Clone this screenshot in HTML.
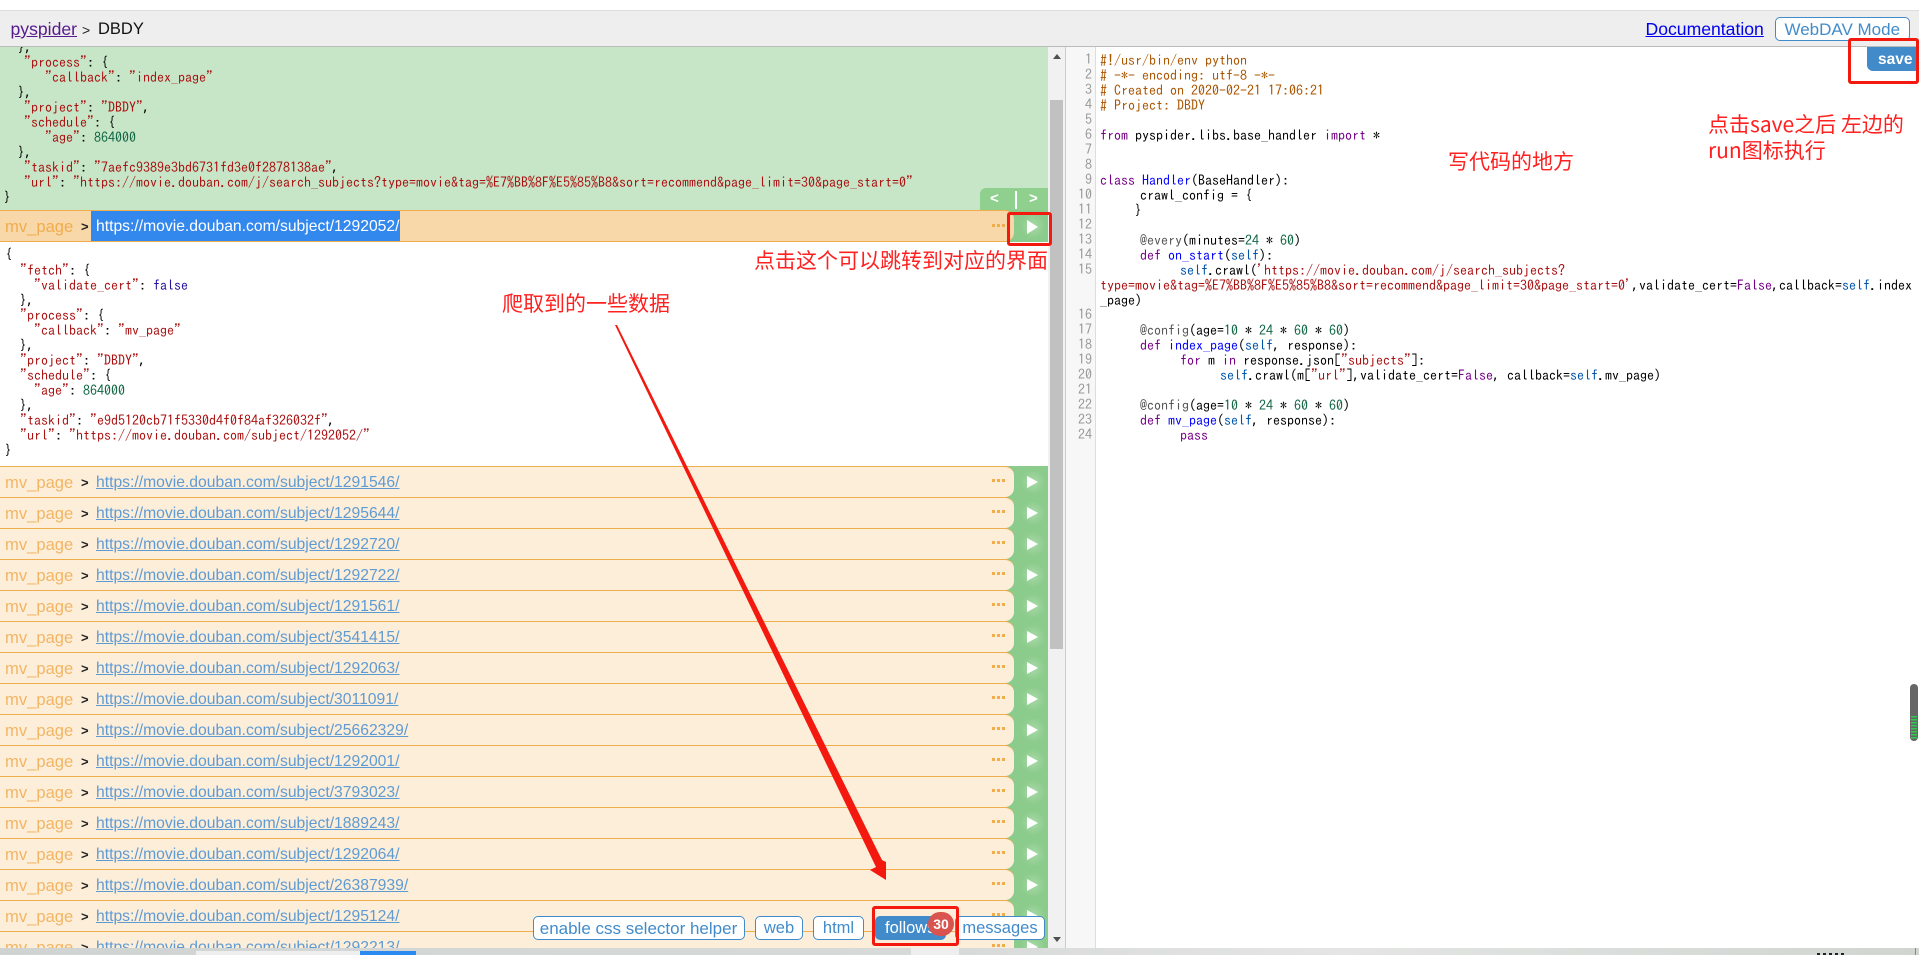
<!DOCTYPE html>
<html lang="zh"><head><meta charset="utf-8"><title>pyspider DBDY</title>
<style>
html,body{margin:0;padding:0;width:1919px;height:955px;overflow:hidden;background:#fff}
body{position:relative;font-family:"Liberation Sans","Noto Sans CJK SC",sans-serif}
.a{position:absolute}
.c{position:absolute;white-space:pre;height:15px;line-height:15px;font:14px/15px "IPAGothic","Liberation Mono",monospace;color:#000}
.s{color:#a11}.n{color:#164}.k{color:#708}.d{color:#00f}.v{color:#05a}.h{color:#a50}.m{color:#555}.t{color:#219}
.ln{position:absolute;left:1066px;width:26px;text-align:right;font:14px/15px "IPAGothic","Liberation Mono",monospace;color:#999}
.row{position:absolute;left:0;width:1048px;height:31px;background:#8bcb8b;overflow:hidden}
.row i{position:absolute;left:0;top:0;width:1014px;height:31px;box-sizing:border-box;background:#fdeeda;border-top:1px solid #f0ad4e;border-radius:0 9px 9px 0}
.row em{position:absolute;left:5px;top:6px;font:normal 16.6px/22px "Liberation Sans",sans-serif;color:#f2b564}
.row u.g{position:absolute;left:81px;top:6px;font:bold 13px/22px "Liberation Sans",sans-serif;color:#222;text-decoration:none}
.row a{position:absolute;left:96px;top:6px;font:15.7px/22px "Liberation Sans",sans-serif;color:#5f9bd3;text-decoration:underline;white-space:nowrap}
.row span.dots{position:absolute;left:992px;top:13px;width:3px;height:3px;background:#f0ad4e;box-shadow:5px 0 #f0ad4e,10px 0 #f0ad4e}
.row span.tri{position:absolute;left:1027px;top:10px;width:0;height:0;border-left:11px solid #fff;border-top:6px solid transparent;border-bottom:6px solid transparent}
.row span.glow{position:absolute;left:1018px;top:1px;width:30px;height:30px;background:radial-gradient(circle,#a9d9a9 0,#8bcb8b 60%)}
.btn{position:absolute;top:916px;height:24px;box-sizing:border-box;border:1px solid #428bca;border-radius:5px;background:#fff;color:#428bca;font:16.5px/22px "Liberation Sans",sans-serif;text-align:center;white-space:nowrap}
.cn{position:absolute;color:#ff2020;font-family:"Noto Sans CJK SC",sans-serif;font-size:21px;line-height:28px;white-space:nowrap}
.box{position:absolute;box-sizing:border-box;border:3px solid #f3190f;border-radius:3px}
</style></head><body>

<div class="a" style="left:0;top:10px;width:1919px;height:37px;box-sizing:border-box;background:#eee;border-top:1px solid #ddd;border-bottom:1px solid #bbb"></div>
<a class="a" style="left:10.5px;top:17px;font-size:17.6px;line-height:24px;color:#551a8b;text-decoration:underline">pyspider</a>
<div class="a" style="left:82px;top:18px;font-size:14px;line-height:24px;color:#222">&gt;</div>
<div class="a" style="left:98px;top:17px;font-size:16.5px;line-height:24px;color:#111">DBDY</div>
<a class="a" style="left:1645.5px;top:17px;font-size:17.6px;line-height:24px;color:#00e;text-decoration:underline;white-space:nowrap">Documentation</a>
<div class="a" style="left:1774.5px;top:17px;width:135.5px;height:24px;box-sizing:border-box;border:1px solid #428bca;border-radius:5px;color:#428bca;font-size:17px;line-height:23px;text-align:center;white-space:nowrap;background:#fff">WebDAV Mode</div>

<!-- green response -->
<div class="a" style="left:0;top:47px;width:1048px;height:163px;background:#c7e5c7;overflow:hidden">
<div class="c" style="left:18px;top:-7px">},</div>
<div class="c" style="left:24px;top:8px"><span class="s">"process"</span>: {</div>
<div class="c" style="left:45px;top:23px"><span class="s">"callback"</span>: <span class="s">"index_page"</span></div>
<div class="c" style="left:18px;top:38px">},</div>
<div class="c" style="left:24px;top:53px"><span class="s">"project"</span>: <span class="s">"DBDY"</span>,</div>
<div class="c" style="left:24px;top:68px"><span class="s">"schedule"</span>: {</div>
<div class="c" style="left:45px;top:83px"><span class="s">"age"</span>: <span class="n">864000</span></div>
<div class="c" style="left:18px;top:98px">},</div>
<div class="c" style="left:24px;top:113px"><span class="s">"taskid"</span>: <span class="s">"7aefc9389e3bd6731fd3e0f2878138ae"</span>,</div>
<div class="c" style="left:24px;top:128px"><span class="s">"url"</span>: <span class="s">"https://movie.douban.com/j/search_subjects?type=movie&amp;tag=%E7%BB%8F%E5%85%B8&amp;sort=recommend&amp;page_limit=30&amp;page_start=0"</span></div>
<div class="c" style="left:4px;top:143px">}</div>
</div>
<div class="a" style="left:980px;top:188px;width:68px;height:22px;background:#8fd08f;border-radius:6px 0 0 0"></div>
<div class="a" style="left:990px;top:188px;font:bold 15px/22px 'Liberation Sans',sans-serif;color:#fff">&lt;</div>
<div class="a" style="left:1015px;top:191px;width:2px;height:18px;background:#fff"></div>
<div class="a" style="left:1029px;top:188px;font:bold 15px/22px 'Liberation Sans',sans-serif;color:#fff">&gt;</div>

<!-- selected row -->
<div class="a" style="left:0;top:210px;width:1048px;height:32px;background:#8bcb8b;overflow:hidden">
<div class="a" style="left:0;top:0;width:1014px;height:32px;box-sizing:border-box;background:#f8d7a8;border-top:1px solid #f0ad4e;border-bottom:1px solid #f0ad4e;border-radius:0 9px 9px 0"></div>
<div class="a" style="left:1018px;top:1px;width:30px;height:30px;background:radial-gradient(circle,#a9d9a9 0,#8bcb8b 60%)"></div>
<div class="a" style="left:91px;top:1px;width:309px;height:30px;background:#3388ee"></div>
<div class="a" style="left:5px;top:6px;font-size:16.6px;line-height:22px;color:#f0ad4e">mv_page</div>
<div class="a" style="left:81px;top:6px;font-weight:bold;font-size:13px;line-height:22px;color:#222">&gt;</div>
<div class="a" style="left:96px;top:6px;font-size:15.7px;line-height:22px;color:#fff;white-space:nowrap">https://movie.douban.com/subject/1292052/</div>
<div class="a" style="left:992px;top:14px;width:3px;height:3px;background:#f0ad4e;box-shadow:5px 0 #f0ad4e,10px 0 #f0ad4e"></div>
<div class="a" style="left:1027px;top:10px;width:0;height:0;border-left:11px solid #fff;border-top:7px solid transparent;border-bottom:7px solid transparent"></div>
</div>

<!-- white response -->
<div class="c" style="left:5px;top:247px">{</div>
<div class="c" style="left:20px;top:263px"><span class="s">"fetch"</span>: {</div>
<div class="c" style="left:34px;top:278px"><span class="s">"validate_cert"</span>: <span class="t">false</span></div>
<div class="c" style="left:20px;top:293px">},</div>
<div class="c" style="left:20px;top:308px"><span class="s">"process"</span>: {</div>
<div class="c" style="left:34px;top:323px"><span class="s">"callback"</span>: <span class="s">"mv_page"</span></div>
<div class="c" style="left:20px;top:338px">},</div>
<div class="c" style="left:20px;top:353px"><span class="s">"project"</span>: <span class="s">"DBDY"</span>,</div>
<div class="c" style="left:20px;top:368px"><span class="s">"schedule"</span>: {</div>
<div class="c" style="left:34px;top:383px"><span class="s">"age"</span>: <span class="n">864000</span></div>
<div class="c" style="left:20px;top:398px">},</div>
<div class="c" style="left:20px;top:413px"><span class="s">"taskid"</span>: <span class="s">"e9d5120cb71f5330d4f0f84af326032f"</span>,</div>
<div class="c" style="left:20px;top:428px"><span class="s">"url"</span>: <span class="s">"https://movie.douban.com/subject/1292052/"</span></div>
<div class="c" style="left:5px;top:443px">}</div>

<!-- rows -->
<div class="row" style="top:466px"><span class="glow"></span><i></i><em>mv_page</em><u class="g">&gt;</u><a>https://movie.douban.com/subject/1291546/</a><span class="dots"></span><span class="tri"></span></div>
<div class="row" style="top:497px"><span class="glow"></span><i></i><em>mv_page</em><u class="g">&gt;</u><a>https://movie.douban.com/subject/1295644/</a><span class="dots"></span><span class="tri"></span></div>
<div class="row" style="top:528px"><span class="glow"></span><i></i><em>mv_page</em><u class="g">&gt;</u><a>https://movie.douban.com/subject/1292720/</a><span class="dots"></span><span class="tri"></span></div>
<div class="row" style="top:559px"><span class="glow"></span><i></i><em>mv_page</em><u class="g">&gt;</u><a>https://movie.douban.com/subject/1292722/</a><span class="dots"></span><span class="tri"></span></div>
<div class="row" style="top:590px"><span class="glow"></span><i></i><em>mv_page</em><u class="g">&gt;</u><a>https://movie.douban.com/subject/1291561/</a><span class="dots"></span><span class="tri"></span></div>
<div class="row" style="top:621px"><span class="glow"></span><i></i><em>mv_page</em><u class="g">&gt;</u><a>https://movie.douban.com/subject/3541415/</a><span class="dots"></span><span class="tri"></span></div>
<div class="row" style="top:652px"><span class="glow"></span><i></i><em>mv_page</em><u class="g">&gt;</u><a>https://movie.douban.com/subject/1292063/</a><span class="dots"></span><span class="tri"></span></div>
<div class="row" style="top:683px"><span class="glow"></span><i></i><em>mv_page</em><u class="g">&gt;</u><a>https://movie.douban.com/subject/3011091/</a><span class="dots"></span><span class="tri"></span></div>
<div class="row" style="top:714px"><span class="glow"></span><i></i><em>mv_page</em><u class="g">&gt;</u><a>https://movie.douban.com/subject/25662329/</a><span class="dots"></span><span class="tri"></span></div>
<div class="row" style="top:745px"><span class="glow"></span><i></i><em>mv_page</em><u class="g">&gt;</u><a>https://movie.douban.com/subject/1292001/</a><span class="dots"></span><span class="tri"></span></div>
<div class="row" style="top:776px"><span class="glow"></span><i></i><em>mv_page</em><u class="g">&gt;</u><a>https://movie.douban.com/subject/3793023/</a><span class="dots"></span><span class="tri"></span></div>
<div class="row" style="top:807px"><span class="glow"></span><i></i><em>mv_page</em><u class="g">&gt;</u><a>https://movie.douban.com/subject/1889243/</a><span class="dots"></span><span class="tri"></span></div>
<div class="row" style="top:838px"><span class="glow"></span><i></i><em>mv_page</em><u class="g">&gt;</u><a>https://movie.douban.com/subject/1292064/</a><span class="dots"></span><span class="tri"></span></div>
<div class="row" style="top:869px"><span class="glow"></span><i></i><em>mv_page</em><u class="g">&gt;</u><a>https://movie.douban.com/subject/26387939/</a><span class="dots"></span><span class="tri"></span></div>
<div class="row" style="top:900px"><span class="glow"></span><i></i><em>mv_page</em><u class="g">&gt;</u><a>https://movie.douban.com/subject/1295124/</a><span class="dots"></span><span class="tri"></span></div>
<div class="row" style="top:931px"><span class="glow"></span><i></i><em>mv_page</em><u class="g">&gt;</u><a>https://movie.douban.com/subject/1292213/</a><span class="dots"></span><span class="tri"></span></div>

<!-- scrollbar -->
<div class="a" style="left:1048px;top:47px;width:17px;height:901px;background:#f1f1f1"></div>
<div class="a" style="left:1050px;top:100px;width:13px;height:549px;background:#c1c1c1"></div>
<div class="a" style="left:1052.5px;top:54px;width:0;height:0;border-left:4px solid transparent;border-right:4px solid transparent;border-bottom:5px solid #505050"></div>
<div class="a" style="left:1052.5px;top:937px;width:0;height:0;border-left:4px solid transparent;border-right:4px solid transparent;border-top:5px solid #505050"></div>
<div class="a" style="left:1065px;top:47px;width:1px;height:901px;background:#ccc"></div>

<!-- gutter -->
<div class="a" style="left:1066px;top:47px;width:30px;height:901px;box-sizing:border-box;background:#f7f7f7;border-right:1px solid #ddd"></div>
<div class="ln" style="top:52px">1</div><div class="ln" style="top:67px">2</div><div class="ln" style="top:82px">3</div><div class="ln" style="top:97px">4</div><div class="ln" style="top:112px">5</div><div class="ln" style="top:127px">6</div><div class="ln" style="top:142px">7</div><div class="ln" style="top:157px">8</div><div class="ln" style="top:172px">9</div><div class="ln" style="top:187px">10</div><div class="ln" style="top:202px">11</div><div class="ln" style="top:217px">12</div><div class="ln" style="top:232px">13</div><div class="ln" style="top:247px">14</div><div class="ln" style="top:262px">15</div><div class="ln" style="top:307px">16</div><div class="ln" style="top:322px">17</div><div class="ln" style="top:337px">18</div><div class="ln" style="top:352px">19</div><div class="ln" style="top:367px">20</div><div class="ln" style="top:382px">21</div><div class="ln" style="top:397px">22</div><div class="ln" style="top:412px">23</div><div class="ln" style="top:427px">24</div>

<!-- code -->
<div class="a" style="left:0;top:1px;width:1919px;height:0">
<div class="c h" style="left:1100px;top:52px">#!/usr/bin/env python</div>
<div class="c h" style="left:1100px;top:67px"># -*- encoding: utf-8 -*-</div>
<div class="c h" style="left:1100px;top:82px"># Created on 2020-02-21 17:06:21</div>
<div class="c h" style="left:1100px;top:97px"># Project: DBDY</div>
<div class="c" style="left:1100px;top:127px"><span class="k">from</span> pyspider.libs.base_handler <span class="k">import</span> *</div>
<div class="c" style="left:1100px;top:172px"><span class="k">class</span> <span class="d">Handler</span>(BaseHandler):</div>
<div class="c" style="left:1140px;top:187px">crawl_config = {</div>
<div class="c" style="left:1135px;top:202px">}</div>
<div class="c" style="left:1140px;top:232px"><span class="m">@every</span>(minutes=<span class="n">24</span> * <span class="n">60</span>)</div>
<div class="c" style="left:1140px;top:247px"><span class="k">def</span> <span class="d">on_start</span>(<span class="v">self</span>):</div>
<div class="c" style="left:1180px;top:262px"><span class="v">self</span>.crawl(<span class="s">'https://movie.douban.com/j/search_subjects?</span></div>
<div class="c" style="left:1100px;top:277px"><span class="s">type=movie&amp;tag=%E7%BB%8F%E5%85%B8&amp;sort=recommend&amp;page_limit=30&amp;page_start=0'</span>,validate_cert=<span class="k">False</span>,callback=<span class="v">self</span>.index</div>
<div class="c" style="left:1100px;top:292px">_page)</div>
<div class="c" style="left:1140px;top:322px"><span class="m">@config</span>(age=<span class="n">10</span> * <span class="n">24</span> * <span class="n">60</span> * <span class="n">60</span>)</div>
<div class="c" style="left:1140px;top:337px"><span class="k">def</span> <span class="d">index_page</span>(<span class="v">self</span>, response):</div>
<div class="c" style="left:1180px;top:352px"><span class="k">for</span> m <span class="k">in</span> response.json[<span class="s">"subjects"</span>]:</div>
<div class="c" style="left:1220px;top:367px"><span class="v">self</span>.crawl(m[<span class="s">"url"</span>],validate_cert=<span class="k">False</span>, callback=<span class="v">self</span>.mv_page)</div>
<div class="c" style="left:1140px;top:397px"><span class="m">@config</span>(age=<span class="n">10</span> * <span class="n">24</span> * <span class="n">60</span> * <span class="n">60</span>)</div>
<div class="c" style="left:1140px;top:412px"><span class="k">def</span> <span class="d">mv_page</span>(<span class="v">self</span>, response):</div>
<div class="c" style="left:1180px;top:427px"><span class="k">pass</span></div>
</div>

<!-- save -->
<div class="a" style="left:1867px;top:47px;width:52px;height:24px;background:#428bca;border-radius:0 0 0 6px;color:#fff;font-weight:bold;font-size:15.5px;line-height:26px;padding-left:11px;box-sizing:border-box">save</div>

<!-- bottom buttons -->
<div class="btn" style="left:532.5px;width:212px;font-size:17px;line-height:23px">enable css selector helper</div>
<div class="btn" style="left:755px;width:48px;line-height:23px">web</div>
<div class="btn" style="left:813px;width:51px;line-height:23px">html</div>
<div class="btn" style="left:874.5px;width:71.5px;background:#428bca;color:#fff;line-height:23px">follows</div>
<div class="btn" style="left:955px;width:90px;line-height:23px">messages</div>
<div class="a" style="left:928px;top:912px;width:26px;height:24px;border-radius:12px;background:#d9534f;color:#fff;font-weight:bold;font-size:14px;line-height:24px;text-align:center">30</div>

<!-- bottom bar -->
<div class="a" style="left:0;top:948px;width:1919px;height:7px;background:linear-gradient(90deg,#cfd4d2 0,#d8dad9 50%,#e4e5e4 70%,#d0d5d1 100%)"></div>
<div class="a" style="left:196px;top:951px;width:164px;height:4px;background:#eee"></div>
<div class="a" style="left:360px;top:951px;width:56px;height:4px;background:#2a8af0"></div>
<div class="a" style="left:911px;top:948px;width:48px;height:7px;background:#eee"></div>
<div class="a" style="left:1915px;top:948px;width:1px;height:7px;background:#888"></div>
<div class="a" style="left:1817px;top:953px;width:28px;height:2px;overflow:hidden;background:repeating-linear-gradient(90deg,#222 0 3px,transparent 3px 6px)"></div>

<!-- scroll widget -->
<div class="a" style="left:1910px;top:684px;width:8px;height:57px;border-radius:4px;background:#666;overflow:hidden">
<div class="a" style="left:1px;top:32px;width:6px;height:24px;background:repeating-linear-gradient(180deg,#2ecc4f 0 1.5px,#666 1.5px 3px)"></div></div>

<!-- annotations -->
<div class="box" style="left:1007px;top:212px;width:45px;height:34px"></div>
<div class="box" style="left:1848px;top:38px;width:71px;height:46px"></div>
<div class="box" style="left:872px;top:906px;width:87px;height:40px"></div>
<div class="cn" style="left:754px;top:246px">点击这个可以跳转到对应的界面</div>
<div class="cn" style="left:502px;top:289px">爬取到的一些数据</div>
<div class="cn" style="left:1448px;top:147px">写代码的地方</div>
<div class="cn" style="left:1708px;top:110px">点击save之后 左边的</div>
<div class="cn" style="left:1708px;top:136px">run图标执行</div>
<svg class="a" style="left:0;top:0" width="1919" height="955" viewBox="0 0 1919 955">
<polygon fill="#f3190f" points="615,325 617,325 882,860 886,862 886,880 870,870 876,867"/>
</svg>
</body></html>
